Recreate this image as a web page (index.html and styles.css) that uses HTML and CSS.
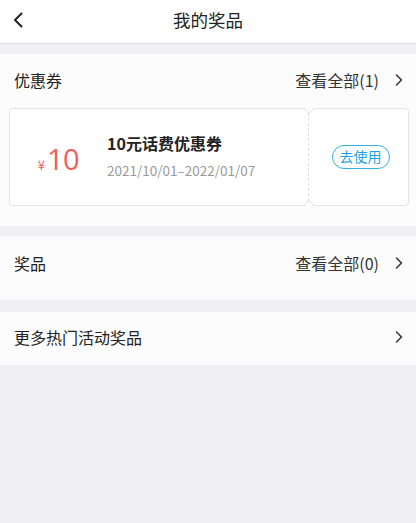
FILE: index.html
```html
<!DOCTYPE html>
<html lang="zh">
<head>
<meta charset="utf-8">
<link rel="stylesheet" href="styles.css">
</head>
<body>
<header class="nav">
  <svg class="back" width="14" height="18" viewBox="0 0 14 18"><path d="M10.5 2.5 L4 9 L10.5 15.5" fill="none" stroke="#222" stroke-width="2" stroke-linecap="round" stroke-linejoin="round"/></svg>
  <div class="title">我的奖品</div>
</header>
<main class="page">
  <section class="block coupons">
    <div class="row">
      <span class="label">优惠券</span>
      <span class="more">查看全部(1)</span>
      <svg class="chev" width="10" height="14" viewBox="0 0 10 14"><path d="M2.5 2 L7.5 7 L2.5 12" fill="none" stroke="#333" stroke-width="1.5" stroke-linecap="round" stroke-linejoin="round"/></svg>
    </div>
    <div class="card">
      <div class="card-main">
        <div class="amount"><span class="yen">¥</span><span class="num">10</span></div>
        <div class="info">
          <div class="name">10元话费优惠券</div>
          <div class="date">2021/10/01–2022/01/07</div>
        </div>
      </div>
      <div class="card-side">
        <span class="use">去使用</span>
      </div>
      <span class="notch notch-top"></span>
      <span class="notch notch-bottom"></span>
    </div>
  </section>
  <section class="block prizes">
    <div class="row">
      <span class="label">奖品</span>
      <span class="more">查看全部(0)</span>
      <svg class="chev" width="10" height="14" viewBox="0 0 10 14"><path d="M2.5 2 L7.5 7 L2.5 12" fill="none" stroke="#333" stroke-width="1.5" stroke-linecap="round" stroke-linejoin="round"/></svg>
    </div>
  </section>
  <section class="block hot">
    <div class="row">
      <span class="label">更多热门活动奖品</span>
      <svg class="chev" width="10" height="14" viewBox="0 0 10 14"><path d="M2.5 2 L7.5 7 L2.5 12" fill="none" stroke="#333" stroke-width="1.5" stroke-linecap="round" stroke-linejoin="round"/></svg>
    </div>
  </section>
</main>
</body>
</html>
```
FILE: styles.css
```css
* { box-sizing: border-box; }
html, body { margin: 0; padding: 0; }
body {
  background: #f0eff4;
  font-family: "Noto Sans CJK SC", "Noto Sans", sans-serif;
  color: #222;
  width: 416px;
  min-height: 523px;
}
.nav {
  height: 44px;
  background: #fff;
  border-bottom: 1px solid #dcdcdc;
  display: flex;
  align-items: center;
  justify-content: center;
  position: relative;
}
.back { position: absolute; left: 11px; top: 11px; }
.title { font-size: 17.5px; color: #222; line-height: 1; margin-top: -4px; }
.page { display: flex; flex-direction: column; gap: 10px; padding-top: 10px; }
.block { background: #fcfcfc; }
.row {
  display: flex;
  align-items: center;
  padding: 0 12px 0 14px;
  height: 54px;
}
.label { font-size: 16px; color: #222; flex: 1; }
.more { font-size: 16px; color: #333; margin-right: 15px; }
.chev { display: block; }
.coupons { padding-bottom: 20px; }
.coupons .row { height: 54px; padding-bottom: 2px; }
.prizes .row { height: 64px; padding-bottom: 10px; }
.hot { margin-top: 2px; }
.hot .row { height: 53px; padding-bottom: 3px; }
.card {
  margin: 0 7px 0 9px;
  height: 98px;
  display: flex;
  position: relative;
  overflow: hidden;
  border-radius: 4px;
}
.card-main {
  flex: 1;
  background: #fff;
  border: 1px solid #e3e3e3;
  border-right: 1px dashed #dedede;
  border-radius: 4px 0 0 4px;
  display: flex;
  align-items: center;
}
.card-side {
  width: 100px;
  background: #fff;
  border: 1px solid #e3e3e3;
  border-left: none;
  border-radius: 0 4px 4px 0;
  display: flex;
  align-items: center;
  justify-content: center;
}
.notch {
  position: absolute;
  right: 95px;
  width: 10px;
  height: 10px;
  border-radius: 50%;
  background: #fcfcfc;
  border: 1px solid #e3e3e3;
}
.notch-top { top: -5px; }
.notch-bottom { bottom: -5px; }
.amount {
  width: 97px;
  display: flex;
  align-items: baseline;
  justify-content: center;
  color: #f25d5d;
  margin-top: 4px;
}
.yen { font-size: 13px; margin-right: 2px; }
.num { font-size: 29px; font-family: "Open Sans", "Noto Sans", sans-serif; line-height: 1; letter-spacing: -0.5px; }
.info { display: flex; flex-direction: column; gap: 10px; margin-top: -2px; }
.name { font-size: 16px; font-weight: 700; color: #222; line-height: 18px; }
.date { font-size: 13.5px; color: #9a9a9a; line-height: 16px; }
.use {
  font-size: 14px;
  color: #1ea1dc;
  border: 1px solid #34aee3;
  border-radius: 12px;
  padding: 1px 7px 2px;
  line-height: 19px;
  margin-left: 4px;
}
```
